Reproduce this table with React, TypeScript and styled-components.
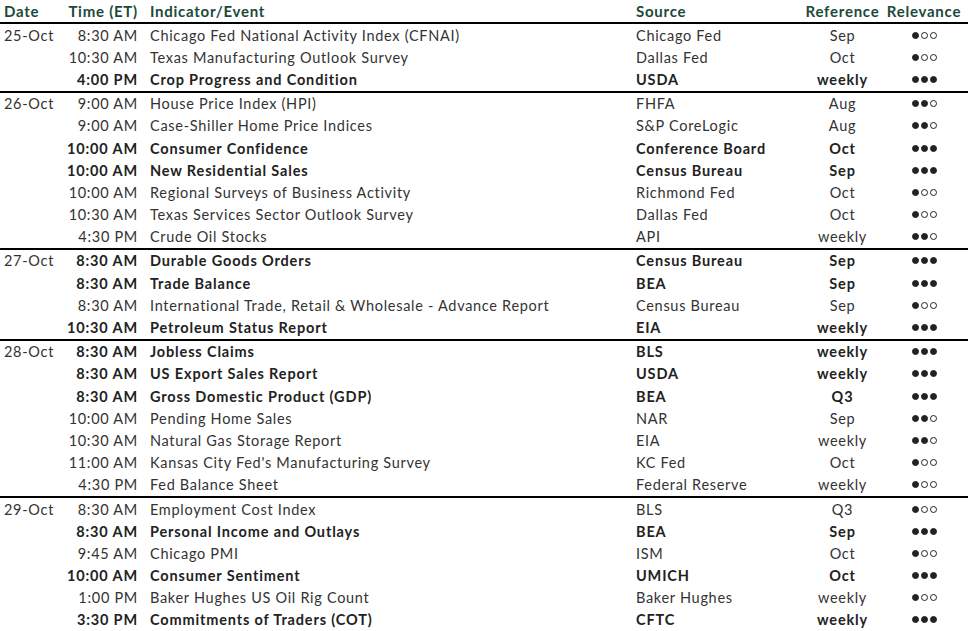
import styled, { createGlobalStyle } from "styled-components";

type Row = {
    time: string;
    event: string;
    source: string;
    period: string;
    rank: 1 | 2 | 3;
    major?: boolean;
};

type Day = { date: string; rows: Row[] };

const calendar: Day[] = [
    {
        date: "25-Oct",
        rows: [
            { time: "8:30 AM", event: "Chicago Fed National Activity Index (CFNAI)", source: "Chicago Fed", period: "Sep", rank: 1 },
            { time: "10:30 AM", event: "Texas Manufacturing Outlook Survey", source: "Dallas Fed", period: "Oct", rank: 1 },
            { time: "4:00 PM", event: "Crop Progress and Condition", source: "USDA", period: "weekly", rank: 3, major: true },
        ],
    },
    {
        date: "26-Oct",
        rows: [
            { time: "9:00 AM", event: "House Price Index (HPI)", source: "FHFA", period: "Aug", rank: 2 },
            { time: "9:00 AM", event: "Case-Shiller Home Price Indices", source: "S&P CoreLogic", period: "Aug", rank: 2 },
            { time: "10:00 AM", event: "Consumer Confidence", source: "Conference Board", period: "Oct", rank: 3, major: true },
            { time: "10:00 AM", event: "New Residential Sales", source: "Census Bureau", period: "Sep", rank: 3, major: true },
            { time: "10:00 AM", event: "Regional Surveys of Business Activity", source: "Richmond Fed", period: "Oct", rank: 1 },
            { time: "10:30 AM", event: "Texas Services Sector Outlook Survey", source: "Dallas Fed", period: "Oct", rank: 1 },
            { time: "4:30 PM", event: "Crude Oil Stocks", source: "API", period: "weekly", rank: 2 },
        ],
    },
    {
        date: "27-Oct",
        rows: [
            { time: "8:30 AM", event: "Durable Goods Orders", source: "Census Bureau", period: "Sep", rank: 3, major: true },
            { time: "8:30 AM", event: "Trade Balance", source: "BEA", period: "Sep", rank: 3, major: true },
            { time: "8:30 AM", event: "International Trade, Retail & Wholesale - Advance Report", source: "Census Bureau", period: "Sep", rank: 1 },
            { time: "10:30 AM", event: "Petroleum Status Report", source: "EIA", period: "weekly", rank: 3, major: true },
        ],
    },
    {
        date: "28-Oct",
        rows: [
            { time: "8:30 AM", event: "Jobless Claims", source: "BLS", period: "weekly", rank: 3, major: true },
            { time: "8:30 AM", event: "US Export Sales Report", source: "USDA", period: "weekly", rank: 3, major: true },
            { time: "8:30 AM", event: "Gross Domestic Product (GDP)", source: "BEA", period: "Q3", rank: 3, major: true },
            { time: "10:00 AM", event: "Pending Home Sales", source: "NAR", period: "Sep", rank: 2 },
            { time: "10:30 AM", event: "Natural Gas Storage Report", source: "EIA", period: "weekly", rank: 2 },
            { time: "11:00 AM", event: "Kansas City Fed's Manufacturing Survey", source: "KC Fed", period: "Oct", rank: 1 },
            { time: "4:30 PM", event: "Fed Balance Sheet", source: "Federal Reserve", period: "weekly", rank: 1 },
        ],
    },
    {
        date: "29-Oct",
        rows: [
            { time: "8:30 AM", event: "Employment Cost Index", source: "BLS", period: "Q3", rank: 1 },
            { time: "8:30 AM", event: "Personal Income and Outlays", source: "BEA", period: "Sep", rank: 3, major: true },
            { time: "9:45 AM", event: "Chicago PMI", source: "ISM", period: "Oct", rank: 1 },
            { time: "10:00 AM", event: "Consumer Sentiment", source: "UMICH", period: "Oct", rank: 3, major: true },
            { time: "1:00 PM", event: "Baker Hughes US Oil Rig Count", source: "Baker Hughes", period: "weekly", rank: 1 },
            { time: "3:30 PM", event: "Commitments of Traders (COT)", source: "CFTC", period: "weekly", rank: 3, major: true },
        ],
    },
];

export default function App() {
    return (
        <>
            <GlobalStyle />
            <Table>
                <HeaderRow>
                    <DateCell>Date</DateCell>
                    <TimeCell>Time (ET)</TimeCell>
                    <EventCell>Indicator/Event</EventCell>
                    <SourceCell>Source</SourceCell>
                    <PeriodCell>Reference</PeriodCell>
                    <RankCell>Relevance</RankCell>
                </HeaderRow>
                {calendar.map((day) => (
                    <DayGroup key={day.date}>
                        {day.rows.map((row, i) => (
                            <BodyRow key={row.event} $major={row.major}>
                                <DateCell>{i === 0 ? day.date : ""}</DateCell>
                                <TimeCell>{row.time}</TimeCell>
                                <EventCell>{row.event}</EventCell>
                                <SourceCell>{row.source}</SourceCell>
                                <PeriodCell>{row.period}</PeriodCell>
                                <RankCell>
                                    <Dots>
                                        {[1, 2, 3].map((n) => (
                                            <Dot key={n} $filled={n <= row.rank} />
                                        ))}
                                    </Dots>
                                </RankCell>
                            </BodyRow>
                        ))}
                    </DayGroup>
                ))}
            </Table>
        </>
    );
}

const GlobalStyle = createGlobalStyle`
    body {
        margin: 0;
        background: #ffffff;
        font-family: "Lato", "Noto Sans", sans-serif;
        color: #2b2b2b;
    }
`;

const Table = styled.div`
    width: 968px;
`;

const RowBase = styled.div`
    display: grid;
    grid-template-columns: 64px 74px 498px 169px 75px 88px;
    align-items: center;
    font-size: 14.5px;
    letter-spacing: 0.7px;
    white-space: nowrap;
`;

const HeaderRow = styled(RowBase)`
    height: 22px;
    font-size: 15px;
    font-weight: 700;
    letter-spacing: 0.75px;
    color: #1c4a3a;
    border-bottom: 2px solid #000;
`;

const DayGroup = styled.div`
    border-bottom: 2px solid #000;
`;

const BodyRow = styled(RowBase)<{ $major?: boolean }>`
    height: 22.2px;
    font-weight: ${(p) => (p.$major ? 700 : 400)};
    letter-spacing: ${(p) => (p.$major ? "0.85px" : "0.7px")};
    color: ${(p) => (p.$major ? "#222" : "#333")};

    & > :first-child {
        font-weight: 400;
        letter-spacing: 0.7px;
        color: #333;
    }
`;

const DateCell = styled.div`
    padding-left: 4px;
`;

const TimeCell = styled.div`
    text-align: right;
`;

const EventCell = styled.div`
    padding-left: 12px;
`;

const SourceCell = styled.div``;

const PeriodCell = styled.div`
    text-align: center;
`;

const RankCell = styled.div`
    display: flex;
    justify-content: center;
`;

const Dots = styled.div`
    display: flex;
    gap: 2px;
`;

const Dot = styled.span<{ $filled: boolean }>`
    width: 7px;
    height: 7px;
    box-sizing: border-box;
    border-radius: 50%;
    background: ${(p) => (p.$filled ? "#222" : "transparent")};
    border: 1.2px solid #222;
`;
